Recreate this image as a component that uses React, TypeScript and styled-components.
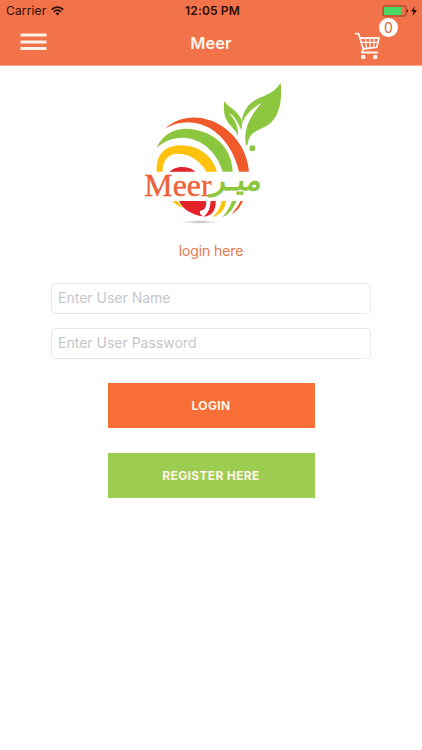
import React from "react";
import styled, { createGlobalStyle } from "styled-components";

const GlobalStyle = createGlobalStyle`
  * { box-sizing: border-box; }
  html, body { margin: 0; background: #fff; }
  body { font-family: Inter, "Liberation Sans", sans-serif; }
`;

const Screen = styled.div`
  width: 422px;
  height: 750px;
  background: #fff;
  overflow: hidden;
`;

const Header = styled.header`
  height: 66px;
  background: #f27249;
  border-bottom: 1px solid #f3a78d;
`;

const StatusBar = styled.div`
  display: grid;
  grid-template-columns: 1fr auto 1fr;
  align-items: center;
  height: 22px;
  padding: 0 5px 0 6px;
  color: #2a0d08;
  font-size: 12px;
  line-height: 22px;
`;

const Carrier = styled.div`
  display: flex;
  align-items: center;
  gap: 5px;
  letter-spacing: 0.15px;
`;

const Clock = styled.div`
  padding-left: 2px;
  font-weight: 600;
  letter-spacing: 0.15px;
`;

const Power = styled.div`
  display: flex;
  justify-content: flex-end;
`;

const NavBar = styled.nav`
  display: grid;
  grid-template-columns: 1fr auto 1fr;
  height: 43px;
  padding: 0 20px;
`;

const IconButton = styled.button<{ $end?: boolean }>`
  position: relative;
  display: flex;
  justify-self: ${(p) => (p.$end ? "end" : "start")};
  margin-right: ${(p) => (p.$end ? "20px" : "0")};
  padding: ${(p) => (p.$end ? "10px 0 0" : "11px 0 0")};
  border: 0;
  background: none;
`;

const Title = styled.h1`
  margin: 0;
  color: #fff3ec;
  font-size: 16.5px;
  font-weight: 600;
  line-height: 43px;
`;

const Badge = styled.span`
  position: absolute;
  top: -4px;
  right: -16px;
  width: 19px;
  height: 19px;
  border-radius: 50%;
  background: #fff;
  color: #d9663f;
  font: 14px/19px Inter, sans-serif;
  text-align: center;
`;

const Content = styled.main`
  display: flex;
  flex-direction: column;
  align-items: center;
  padding-top: 9px;
`;

const LogoFrame = styled.div`
  width: 160px;
  height: 155px;
  margin-left: 8px;
`;

const Prompt = styled.p`
  margin: 11px 0 22px;
  color: #e8784f;
  font-size: 14px;
  letter-spacing: -0.1px;
  line-height: 20px;
`;

const Form = styled.form`
  display: flex;
  flex-direction: column;
  align-items: center;
`;

const Field = styled.input`
  width: 320px;
  height: 31px;
  margin-bottom: 14px;
  padding: 0 6px 2px;
  border: 1px solid #e8e8ea;
  border-radius: 5px;
  background: #fff;
  font: 14px Inter, sans-serif;
  &::placeholder { color: #c5c6cb; opacity: 1; }
`;

const Action = styled.button<{ $color: string }>`
  width: 207px;
  height: 45px;
  margin: 10px 0 15px;
  padding: 0;
  border: 0;
  background: ${(p) => p.$color};
  color: #fff5ea;
  font: 700 12px Inter, sans-serif;
  letter-spacing: 0.35px;
`;

const Logo = () => (
  <svg width="160" height="155" viewBox="0 0 480 465" role="img" aria-label="Meer">
    <defs>
      <radialGradient id="shade">
        <stop offset="0" stopColor="#aaa" />
        <stop offset="1" stopColor="#fff" stopOpacity="0" />
      </radialGradient>
    </defs>
    <ellipse cx="195" cy="441" rx="76" ry="7" fill="url(#shade)" />
    <path fill="#f05a2b" d="M91 160C135 118 210 116 266 157C308 188 337 232 342 290H312C298 232 270 188 225 160C183 136 135 136 91 160Z" />
    <path fill="#8cc63f" d="M65 218C94 155 157 150 216 175C263 196 291 238 293 290H263C249 243 219 208 177 194C136 181 98 190 65 218Z" />
    <path fill="#ffc20e" d="M65 290C61 238 91 211 139 211C192 212 233 243 246 290H214C196 257 166 238 131 236C101 235 82 256 83 290Z" />
    <path fill="#e3222a" d="M104 290C120 271 164 271 181 290Z" />
    <path fill="#ffc20e" d="M113 378H127L144 399C130 394 119 387 113 378Z" />
    <path fill="#e3222a" d="M132 378H213C215 395 211 404 200 406C190 409 195 419 204 424C171 420 143 403 132 378Z" />
    <path fill="#e3222a" d="M227 378H242C243 405 232 424 205 425C222 413 225 399 227 378Z" />
    <path fill="#ffc20e" d="M260 378H274C269 404 257 419 232 427C249 411 256 397 260 378Z" />
    <path fill="#8cc63f" d="M291 378H304C295 401 283 417 262 427C277 409 286 394 291 378Z" />
    <path fill="#f05a2b" d="M316 378H324C316 395 306 410 290 417C302 403 311 391 316 378Z" />
    <path fill="#8cc63f" d="M437 23C443 78 432 128 398 151C374 166 343 169 338 207L334 213C324 175 337 132 380 83C342 104 324 132 319 153C319 122 334 88 361 75C390 59 417 56 437 23Z" />
    <path fill="#8cc63f" d="M267 79C283 99 308 107 319 134C322 143 321 155 319 165C307 139 298 122 281 114C298 132 311 151 309 184C304 166 292 160 281 145C264 122 267 102 267 79Z" />
    <circle cx="352" cy="220" r="9" fill="#8cc63f" />
    <text x="28" y="362" fill="#ee6038" stroke="#ee6038" strokeWidth="1" fontFamily="Liberation Serif, serif" fontSize="93" textLength="202" lengthAdjust="spacingAndGlyphs">Meer</text>
    <text transform="translate(378 346) skewX(-8)" direction="rtl" fill="#8cc63f" stroke="#8cc63f" strokeWidth="3" fontFamily="DejaVu Sans, sans-serif" fontSize="87" textLength="151" lengthAdjust="spacingAndGlyphs">ميـر</text>
  </svg>
);

const Wifi = () => (
  <svg width="13" height="10" viewBox="0 0 13 10" fill="none" stroke="#2a0d08" strokeWidth="1.7">
    <path d="M.7 3.6C4 .2 9 .2 12.3 3.6M2.8 5.9C5 3.8 8 3.8 10.2 5.9" />
    <path d="M4.5 7.4Q6.5 5.8 8.5 7.4L6.5 9.5Z" fill="#2a0d08" stroke="none" />
  </svg>
);

const Battery = () => (
  <svg width="35" height="12" viewBox="0 0 35 12">
    <rect x="1" y="1" width="23" height="10" rx="1.5" fill="none" stroke="#8b3e25" />
    <rect x="2" y="2" width="17" height="8" fill="#4cd964" />
    <path d="M25 4Q27 6 25 8Z" fill="#2a0d08" />
    <path d="M33 1L29 6.5H31.5L30.5 11L35 5H32Z" fill="#2a0d08" />
  </svg>
);

const Menu = () => (
  <svg width="27" height="18" viewBox="0 0 27 18" fill="#fff0e8">
    <path d="M.5 .5h26v3H.5zM.5 7.5h26v3H.5zM.5 14h26v3H.5z" />
  </svg>
);

const Cart = () => (
  <svg width="28" height="28" viewBox="0 0 28 28" fill="none" stroke="#fff3ed">
    <path strokeWidth="1.8" d="M1 1.7H4.6L9.3 17.3L8 20.5H24M5.8 6H25L22.8 15.3L9 17" />
    <path strokeWidth="1.3" d="M7.4 10.3H24M11.5 6L12.5 16M16 6V16M20.5 6L19.5 16" />
    <circle cx="9.2" cy="25" r="2.3" fill="#fff3ed" stroke="none" />
    <circle cx="21.2" cy="25" r="2.3" fill="#fff3ed" stroke="none" />
  </svg>
);

export default function App() {
  return (
    <Screen>
      <GlobalStyle />
      <Header>
        <StatusBar>
          <Carrier>Carrier <Wifi /></Carrier>
          <Clock>12:05 PM</Clock>
          <Power><Battery /></Power>
        </StatusBar>
        <NavBar>
          <IconButton aria-label="Menu"><Menu /></IconButton>
          <Title>Meer</Title>
          <IconButton $end aria-label="Cart"><Cart /><Badge>0</Badge></IconButton>
        </NavBar>
      </Header>
      <Content>
        <LogoFrame><Logo /></LogoFrame>
        <Prompt>login here</Prompt>
        <Form onSubmit={(e) => e.preventDefault()}>
          <Field placeholder="Enter User Name" />
          <Field type="password" placeholder="Enter User Password" />
          <Action $color="#f76f36">LOGIN</Action>
          <Action type="button" $color="#9dcd50">REGISTER HERE</Action>
        </Form>
      </Content>
    </Screen>
  );
}
